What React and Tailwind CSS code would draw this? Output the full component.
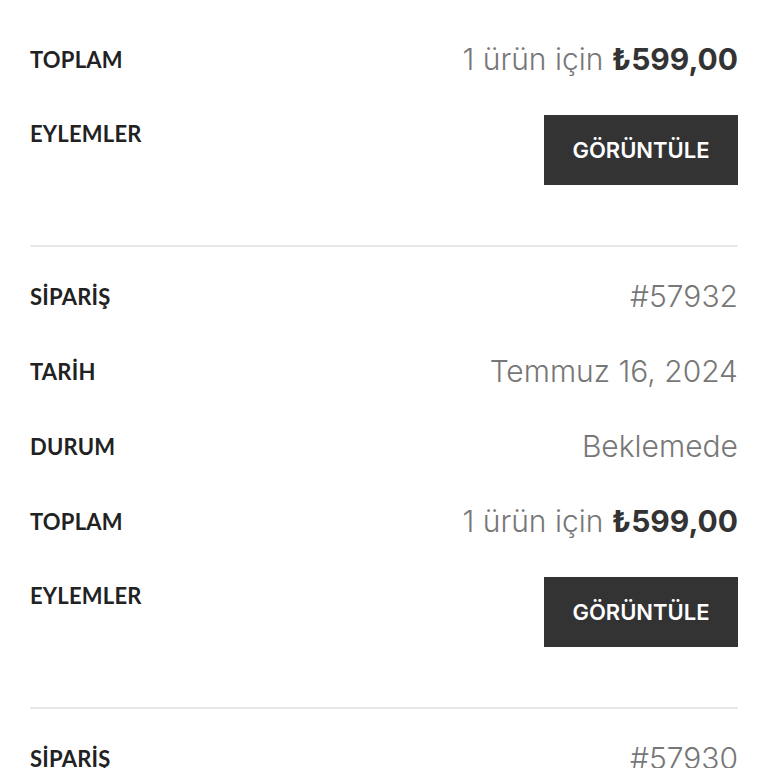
import { useLayoutEffect, useRef } from "react";

const orders = [
  { id: "57935", date: "Temmuz 18, 2024", status: "Beklemede", count: 1, total: "₺599,00" },
  { id: "57932", date: "Temmuz 16, 2024", status: "Beklemede", count: 1, total: "₺599,00" },
  { id: "57930", date: "Temmuz 15, 2024", status: "Beklemede", count: 1, total: "₺599,00" },
];

function Row({ label, children }) {
  return (
    <div className="flex h-[75px] items-center justify-between">
      <span className="font-['Lato',sans-serif] text-[22px] font-bold tracking-[0.2px] text-[#222]">{label}</span>
      <span className="font-['Inter',sans-serif] text-[30px] font-light text-[#777]">{children}</span>
    </div>
  );
}

function Order({ order, first }) {
  return (
    <div className={first ? "pt-3" : "border-t-2 border-[#e8e8e8] pt-3"}>
      <Row label="SİPARİŞ">#{order.id}</Row>
      <Row label="TARİH">{order.date}</Row>
      <Row label="DURUM">{order.status}</Row>
      <Row label="TOPLAM">
        {order.count} ürün için <b className="font-bold text-[#333]">{order.total}</b>
      </Row>
      <div className="flex items-start justify-between pt-[18px] pb-[60px]">
        <span className="mt-[4px] font-['Lato',sans-serif] text-[22px] leading-[30px] font-bold tracking-[0.2px] text-[#222]">
          EYLEMLER
        </span>
        <button className="h-[70px] w-[194px] bg-[#333] font-['Inter',sans-serif] text-[22px] font-semibold text-white">
          GÖRÜNTÜLE
        </button>
      </div>
    </div>
  );
}

export default function App() {
  const listRef = useRef(null);

  // list is scrolled down so the first order shows from its total
  useLayoutEffect(() => {
    listRef.current.scrollTop = 215;
  }, []);

  return (
    <div ref={listRef} className="h-screen overflow-hidden bg-white">
      <div className="px-[30px]">
        {orders.map((o, i) => (
          <Order key={o.id} order={o} first={i === 0} />
        ))}
      </div>
    </div>
  );
}
